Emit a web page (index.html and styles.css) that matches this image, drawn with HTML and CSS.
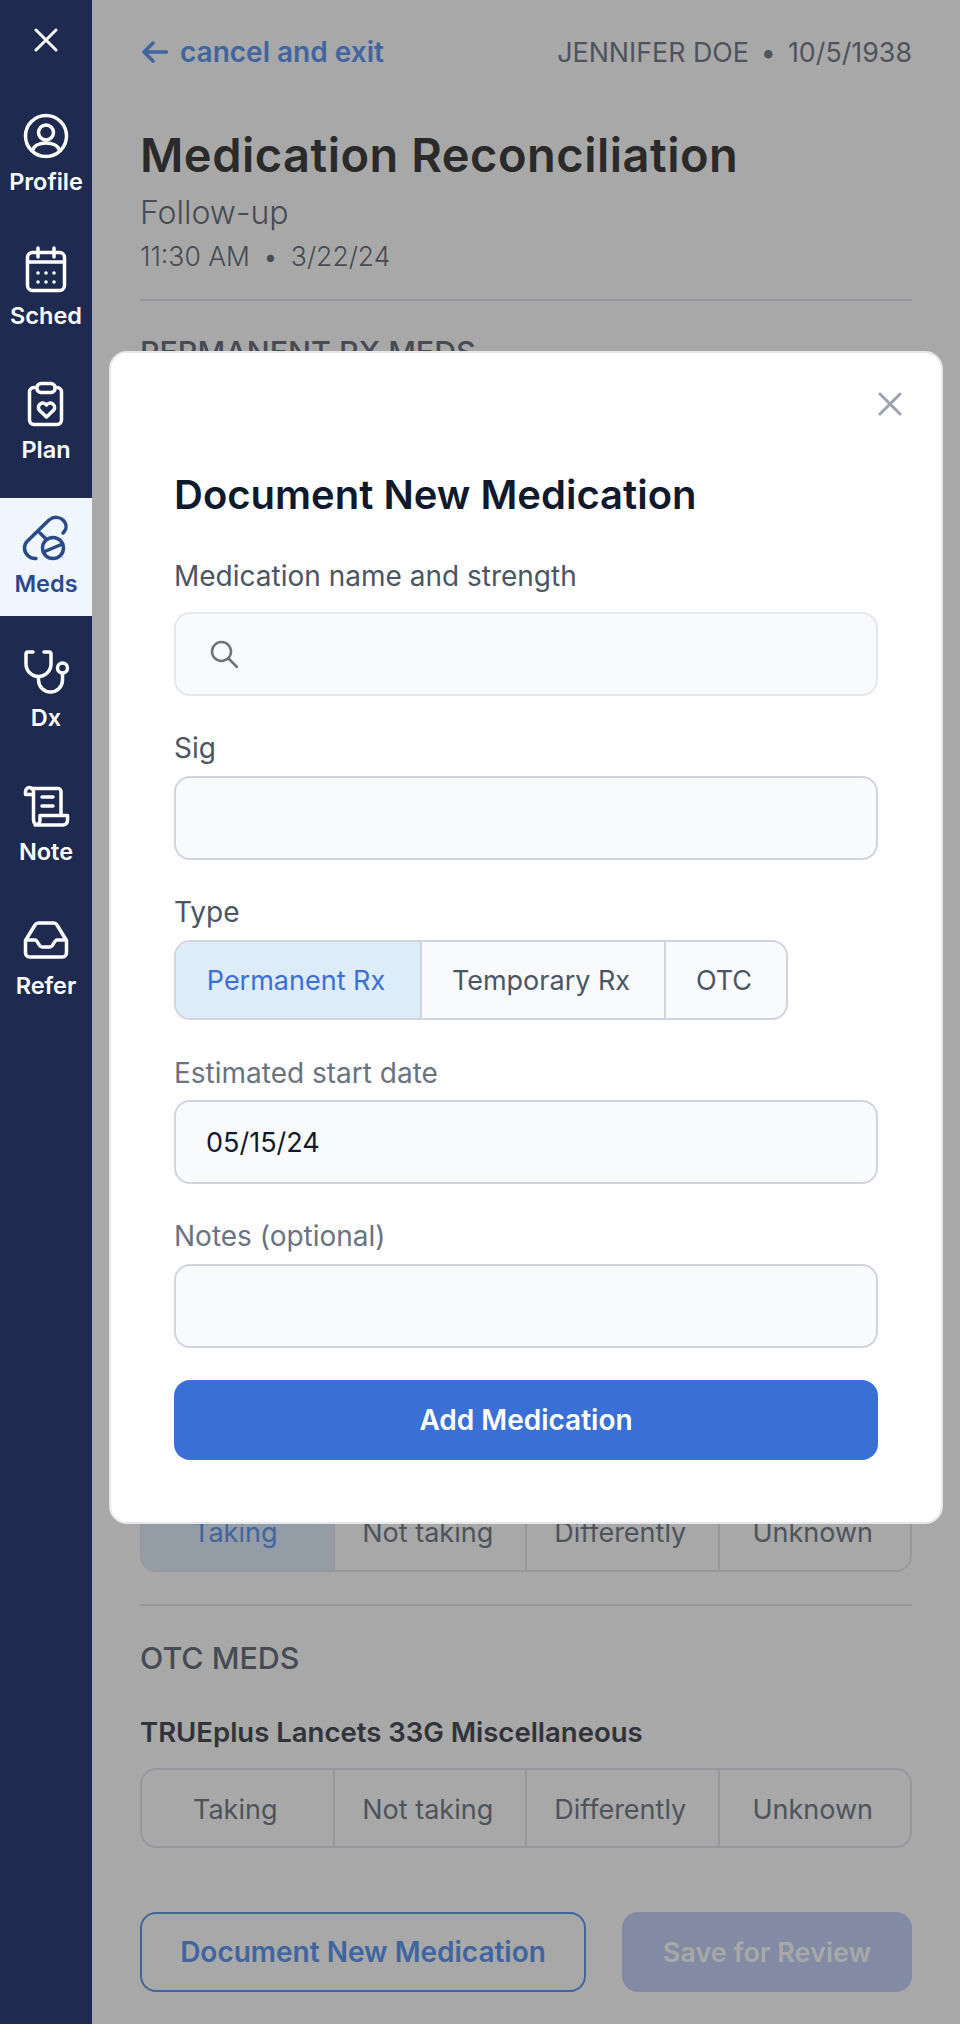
FILE: index.html
```html
<!DOCTYPE html>
<html lang="en">
<head>
<meta charset="utf-8">
<title>Medication Reconciliation</title>
<link rel="stylesheet" href="styles.css">
</head>
<body>
<div class="app">
  <nav class="sidebar">
    <button class="side-close" aria-label="Close">
      <svg viewBox="0 0 24 24" width="24" height="24"><path d="M2 2 22 22M22 2 2 22" class="line"/></svg>
    </button>
    <div class="side-items">
      <a class="side-item">
        <svg viewBox="0 0 48 48" class="side-icon"><circle cx="24" cy="24" r="20.5"/><circle cx="24" cy="20.5" r="7.5"/><path d="M10.5 38.5C12 33.5 18 31 24 31s12 2.500 13.500 7.500"/></svg>
        <span>Profile</span>
      </a>
      <a class="side-item">
        <svg viewBox="0 0 48 48" class="side-icon"><rect x="5.500" y="6.500" width="37" height="38" rx="5"/><path d="M16 2v9M32 2v9M5.500 16h37"/><g class="dots"><circle cx="16" cy="27" r="1.800"/><circle cx="24" cy="27" r="1.800"/><circle cx="32" cy="27" r="1.800"/><circle cx="16" cy="36" r="1.800"/><circle cx="24" cy="36" r="1.800"/><circle cx="32" cy="36" r="1.800"/></g></svg>
        <span>Sched</span>
      </a>
      <a class="side-item">
        <svg viewBox="0 0 48 48" class="side-icon"><rect x="7.500" y="7.500" width="32" height="37" rx="4.500"/><rect x="15" y="3.500" width="18" height="9" rx="4" class="cover"/><path d="M24.500 37 17.200 30a4.400 4.400 0 0 1 7.300-5 4.400 4.400 0 0 1 7.300 5z"/></svg>
        <span>Plan</span>
      </a>
      <a class="side-item active">
        <svg viewBox="0 0 48 48" class="side-icon"><path d="M14 44.500C8 45 2.500 40 2.500 34c0-3 1-5 3-7L27 6c5-4 11-3 14 0 4 4 4 9 0 13M18 19l5.500 5.500"/><circle cx="31" cy="34" r="10.500"/><path d="M21.500 38 40.500 30"/></svg>
        <span>Meds</span>
      </a>
      <a class="side-item">
        <svg viewBox="0 0 48 48" class="side-icon"><path d="M11 4H6a2 2 0 0 0-2 2v10a12.500 12.500 0 0 0 25 0V6a2 2 0 0 0-2-2h-5M16.500 29v3a12 12 0 0 0 24 0v-6.500"/><circle cx="40.500" cy="20" r="5"/></svg>
        <span>Dx</span>
      </a>
      <a class="side-item">
        <svg viewBox="0 0 48 48" class="side-icon"><path d="M9 6.500H36a3 3 0 0 1 3 3V33M20 15h11M20 24h11M11.500 12.500H3.500V9.500a3.500 3.500 0 0 1 8 0V38a5 5 0 0 0 5 5H41a4.500 4.500 0 0 0 4.500-4.500V33.500H18V38a5 5 0 0 1-5 5"/></svg>
        <span>Note</span>
      </a>
      <a class="side-item">
        <svg viewBox="0 0 48 48" class="side-icon"><path d="M3.500 24.500V37a4 4 0 0 0 4 4h33a4 4 0 0 0 4-4V24.500L35 9a4 4 0 0 0-3.500-2h-15A4 4 0 0 0 13 9zM3.500 24h9.500c3 0 3.500 7 7 7h8c3.500 0 4-7 7-7h9.500"/></svg>
        <span>Refer</span>
      </a>
    </div>
  </nav>

  <main class="content">
    <header class="topbar">
      <a class="back">
        <svg viewBox="0 0 26 22" width="26" height="22"><path d="M24.500 11H2M11 2 2 11l9 9"/></svg>
        cancel and exit
      </a>
      <span class="patient">JENNIFER DOE<i class="dot">•</i>10/5/1938</span>
    </header>
    <h1 class="page-title">Medication Reconciliation</h1>
    <p class="visit-type">Follow-up</p>
    <p class="visit-time">11:30 AM<i class="dot">•</i>3/22/24</p>

    <section class="section">
      <h2 class="section-title">PERMANENT RX MEDS</h2>
      <div class="occluded-rows"></div>
      <div class="segments">
        <span class="selected">Taking</span><span>Not taking</span><span>Differently</span><span>Unknown</span>
      </div>
    </section>

    <section class="section otc">
      <h2 class="section-title">OTC MEDS</h2>
      <h3 class="med-name">TRUEplus Lancets 33G Miscellaneous</h3>
      <div class="segments">
        <span>Taking</span><span>Not taking</span><span>Differently</span><span>Unknown</span>
      </div>
    </section>

    <div class="actions">
      <button class="btn-outline">Document New Medication</button>
      <button class="btn-disabled">Save for Review</button>
    </div>
  </main>

  <div class="overlay"></div>

  <div class="modal" role="dialog">
    <button class="modal-close" aria-label="Close">
      <svg viewBox="0 0 24 24" width="24" height="24"><path d="M2 2 22 22M22 2 2 22"/></svg>
    </button>
    <h2 class="modal-title">Document New Medication</h2>

    <label class="label first">Medication name and strength</label>
    <div class="input search">
      <svg viewBox="0 0 28 28" width="28" height="28"><circle cx="11.500" cy="11.500" r="9.500"/><path d="M19 19l8 8"/></svg>
    </div>

    <label class="label dark">Sig</label>
    <div class="input strong"></div>

    <label class="label dark">Type</label>
    <div class="type-group">
      <span class="selected">Permanent Rx</span><span>Temporary Rx</span><span>OTC</span>
    </div>

    <label class="label after-group">Estimated start date</label>
    <div class="input strong">05/15/24</div>

    <label class="label">Notes (optional)</label>
    <div class="input strong"></div>

    <button class="btn-primary">Add Medication</button>
  </div>
</div>
</body>
</html>
```
FILE: styles.css
```css
* { box-sizing: border-box; }
html, body { margin: 0; padding: 0; }
body { font-family: Inter, "Liberation Sans", sans-serif; background: #fff; color: #404040; }
h1, h2, h3, p { margin: 0; }
button { font-family: inherit; border: 0; background: none; padding: 0; }
i { font-style: normal; }

.app { position: relative; display: flex; width: 960px; height: 2024px; overflow: hidden; }

/* Sidebar */
.sidebar { position: relative; z-index: 2; flex: 0 0 92px; background: #1e2a4f; padding-top: 28px; display: flex; flex-direction: column; align-items: stretch; }
.side-close { display: flex; justify-content: center; height: 24px; }
.side-close path { fill: none; stroke: #fff; stroke-width: 3; stroke-linecap: round; }
.side-items { margin-top: 44px; display: flex; flex-direction: column; gap: 16px; }
.side-item { height: 118px; padding-top: 16px; display: flex; flex-direction: column; align-items: center; color: #fff; font-size: 23.500px; font-weight: 600; line-height: 28px; }
.side-item span { margin-top: 8px; }
.side-item.active { background: #f0f6fe; color: #2b4a8a; }
.side-icon { width: 48px; height: 48px; flex: none; fill: none; stroke: currentColor; stroke-width: 3.500; stroke-linecap: round; stroke-linejoin: round; }
.side-icon .dots circle { fill: currentColor; stroke: none; }
.side-icon .cover { fill: #1e2a4f; }

/* Page beneath the dialog */
.content { flex: 1; padding: 36px 48px 0; display: flex; flex-direction: column; }
.topbar { display: flex; justify-content: space-between; align-items: center; height: 32px; }
.back { display: flex; align-items: center; gap: 12px; margin-left: 2px; color: #6299f1; font-size: 28px; font-weight: 600; }
.back svg { fill: none; stroke: currentColor; stroke-width: 3.500; stroke-linecap: round; stroke-linejoin: round; }
.patient { font-size: 26.800px; color: #78808c; }
.dot { margin: 0 12px; }
.page-title { margin-top: 59px; font-size: 47px; letter-spacing: .5px; line-height: 56px; font-weight: 600; color: #404040; }
.visit-type { margin-top: 12px; font-size: 32px; line-height: 36px; font-weight: 300; color: #6b7280; }
.visit-time { margin-top: 7px; font-size: 26.500px; line-height: 36px; font-weight: 300; color: #6b7280; }
.visit-time .dot { margin: 0 13px; }
.section { margin-top: 25px; padding-top: 33px; border-top: 2px solid #e6e5f3; }
.section-title { font-size: 30.400px; line-height: 36px; font-weight: 500; color: #6b7280; }
.occluded-rows { height: 1121px; }
.segments { display: flex; height: 81px; border: 2px solid #e6e5f3; border-radius: 16px; overflow: hidden; }
.segments span { flex: 1; display: flex; align-items: center; justify-content: center; padding: 2px 4px 0 0; font-size: 27px; color: #78808c; border-left: 2px solid #e6e5f3; }
.segments span:first-child { border-left: 0; }
.segments .selected { background: #e1edfb; color: #6299f1; }
.otc { margin-top: 32px; padding-top: 34px; }
.otc .segments { height: 80px; }
.med-name { margin-top: 40px; font-size: 27.500px; line-height: 32px; font-weight: 600; color: #4b4f59; }
.otc .med-name + .segments { margin-top: 20px; }
.actions { margin-top: 64px; display: flex; justify-content: space-between; }
.btn-outline, .btn-disabled { height: 80px; border-radius: 16px; font-size: 27px; font-weight: 600; }
.btn-outline { width: 446px; border: 2px solid #6299f1; color: #6299f1; font-size: 28px; }
.btn-disabled { width: 290px; background: #c5d4f8; color: #fff; }

.overlay { position: absolute; inset: 0; z-index: 1; background: rgba(0, 0, 0, .34); }

/* Dialog */
.modal { position: absolute; z-index: 3; left: 109px; top: 351px; width: 834px; height: 1173px; padding: 118px 63px 0 63px; background: #fff; border: 2px solid #e5e7eb; border-radius: 18px; }
.modal-close { position: absolute; top: 39px; right: 39px; width: 24px; height: 24px; }
.modal-close path { fill: none; stroke: #9ca3af; stroke-width: 3; stroke-linecap: round; }
.modal-title { font-size: 40px; line-height: 48px; font-weight: 600; color: #111a2c; }
.label { display: block; margin-top: 34px; margin-bottom: 10px; font-size: 28px; line-height: 36px; font-weight: 400; color: #6b7280; }
.label.first { margin-top: 39px; margin-bottom: 18px; color: #4b5563; }
.label.dark { color: #4b5563; }
.label.after-group { margin-top: 35px; margin-bottom: 9px; }
.input { display: flex; align-items: center; height: 84px; padding: 0 30px; background: #f9fafb; border: 2px solid #e5e7eb; border-radius: 16px; font-size: 27px; color: #111a2c; }
.input.strong { border-color: #d1d3de; }
.input.search svg { margin-left: 4px; fill: none; stroke: #6b7280; stroke-width: 2.500; stroke-linecap: round; }
.type-group { display: flex; width: 614px; height: 80px; background: #f9fafb; border: 2px solid #d1d3de; border-radius: 16px; overflow: hidden; }
.type-group span { display: flex; align-items: center; justify-content: center; padding-right: 4px; font-size: 27px; color: #4b5563; border-left: 2px solid #d1d3de; }
.type-group span:nth-child(1) { width: 244px; border-left: 0; background: #deebf9; color: #3a70d6; }
.type-group span:nth-child(2) { width: 244px; }
.type-group span:nth-child(3) { flex: 1; }
.btn-primary { display: block; width: 100%; height: 80px; margin-top: 32px; background: #3a70d6; color: #fff; border-radius: 16px; font-size: 28px; font-weight: 600; }
```
